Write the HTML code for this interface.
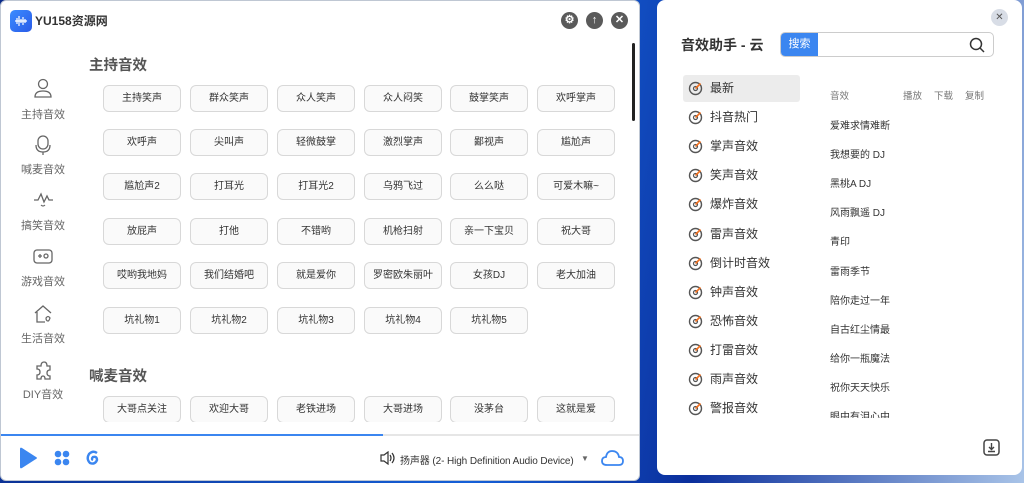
<!DOCTYPE html>
<html><head><meta charset="utf-8"><style>
*{margin:0;padding:0;box-sizing:border-box}
body{width:1024px;height:483px;overflow:hidden;position:relative;font-family:"Liberation Sans","Noto Sans CJK SC",sans-serif;background:linear-gradient(100deg,#0a2a8a 0%,#1560d8 50%,#0b2f9c 70%,#a9c4e8 100%)}
.win{position:absolute;background:#fff;border-radius:6px;overflow:hidden}
#L{left:0;top:0;width:640px;height:481px;border:1px solid #bfc7d3}
#R{left:657px;top:0;width:365px;height:475px;border-radius:8px}
.abs{position:absolute;white-space:nowrap}
.btn{position:absolute;width:78px;height:27px;border:1px solid #d8d8d8;border-radius:6px;background:#fafafa;font-size:10px;color:#333;text-align:center;line-height:25px}
.h{position:absolute;left:88px;font-size:14.5px;color:#555;font-weight:bold}
.side{position:absolute;left:0;width:84px;text-align:center;font-size:11px;color:#666}
.circ{position:absolute;width:17px;height:17px;border-radius:50%;background:#5a5a5a;top:11px;color:#fff;font-size:11px;text-align:center;line-height:17px;font-weight:bold}
.li{position:absolute;left:26px;width:117px;height:27px;font-size:12px;color:#333;line-height:27px;padding-left:27px;border-radius:3px}
.li svg{position:absolute;left:5px;top:6px}
.it{position:absolute;left:173px;font-size:10px;color:#333;white-space:nowrap}
</style></head><body>
<div class="win" id="L">
 <div class="abs" style="left:9px;top:9px;width:22px;height:22px;border-radius:5px;background:linear-gradient(135deg,#3a8cff,#2a5be8)"><svg width="22" height="22"><path d="M5 11h12M7 8v6M9 6v10M11 9v4M13 7v8M15 9v4" stroke="#fff" stroke-width="1.2"/></svg></div>
 <div class="abs" style="left:34px;top:12px;font-size:12px;line-height:16px;font-weight:bold;color:#333">YU158资源网</div>
 <div class="circ" style="left:560px">⚙</div><div class="circ" style="left:585px">↑</div><div class="circ" style="left:610px">✕</div>
 <div class="abs" style="left:631px;top:42px;width:3px;height:78px;background:#222;border-radius:2px"></div>
 <div class="h" style="top:53px">主持音效</div>
 <div class="h" style="top:364px">喊麦音效</div>
 <div id="grid"></div>
 <div class="side" style="top:77px"><svg width="20" height="22" viewBox="0 0 20 22"><circle cx="10" cy="6" r="4.5" fill="none" stroke="#666" stroke-width="1.3"/><path d="M2 19q0-6 8-6t8 6z" fill="none" stroke="#666" stroke-width="1.3"/></svg><div style="margin-top:3px">主持音效</div></div>
 <div class="side" style="top:133px"><svg width="20" height="22"><rect x="5" y="2" width="10" height="13" rx="5" fill="none" stroke="#666" stroke-width="1.3"/><path d="M3 11q0 7 7 7t7-7M10 18v3" fill="none" stroke="#666" stroke-width="1.3"/></svg><div style="margin-top:2px">喊麦音效</div></div>
 <div class="side" style="top:189px"><svg width="22" height="22"><path d="M2 10h4l3-6 3 8 3-6 2 4h4" fill="none" stroke="#666" stroke-width="1.3"/><path d="M9 15q2 2 4 0" fill="none" stroke="#666" stroke-width="1.2"/></svg><div style="margin-top:2px">搞笑音效</div></div>
 <div class="side" style="top:245px"><svg width="22" height="22"><rect x="2" y="4" width="18" height="13" rx="3" fill="none" stroke="#666" stroke-width="1.3"/><path d="M6 10h4M8 8v4" stroke="#666" stroke-width="1.3"/><circle cx="14" cy="10" r="2" fill="none" stroke="#666" stroke-width="1.3"/></svg><div style="margin-top:2px">游戏音效</div></div>
 <div class="side" style="top:302px"><svg width="22" height="22"><path d="M3 10l8-7 8 7M5 9v10h8" fill="none" stroke="#666" stroke-width="1.3"/><path d="M14 15q2-3 4 0q-1 3-2 3q-2 0-2-3z" fill="none" stroke="#666" stroke-width="1.2"/></svg><div style="margin-top:2px">生活音效</div></div>
 <div class="side" style="top:358px"><svg width="22" height="22"><path d="M5 7h4q0-4 3-4t3 4h3v4q-3 0-3 3t3 3v3h-5q0-3-2-3t-2 3H5v-4q3 0 3-3t-3-3z" fill="none" stroke="#666" stroke-width="1.3"/></svg><div style="margin-top:2px">DIY音效</div></div>
 <div class="abs" style="left:0;top:433px;width:640px;height:2px;background:#e6e6e6"><div style="width:382px;height:2px;background:#3b86f0"></div></div>
 <svg class="abs" style="left:17px;top:446px" width="20" height="22"><path d="M2 2q0-2 2-1l14 9q2 1 0 2L4 21q-2 1-2-1z" fill="#3b86f0"/></svg>
 <svg class="abs" style="left:53px;top:449px" width="16" height="16"><circle cx="4" cy="4" r="3.3" fill="#3b86f0"/><circle cx="12" cy="4" r="3.3" fill="#3b86f0"/><circle cx="4" cy="12" r="3.3" fill="#3b86f0"/><circle cx="12" cy="12" r="3.3" fill="#3b86f0"/></svg>
 <svg class="abs" style="left:84px;top:448px" width="16" height="17"><path d="M12 4Q8 1 4 5Q1 10 5 14Q10 16 12 11Q12 7 8 8Q6 10 8 11" fill="none" stroke="#3b86f0" stroke-width="2.4"/></svg>
 <svg class="abs" style="left:379px;top:450px" width="16" height="14"><path d="M1 4h3l4-3v12l-4-3H1z" fill="none" stroke="#333" stroke-width="1.2"/><path d="M10 4q2 3 0 6M12 2q4 5 0 10" fill="none" stroke="#333" stroke-width="1.2"/></svg>
 <div class="abs" style="left:399px;top:451px;font-size:10px;color:#333;letter-spacing:-0.1px">扬声器 (2- High Definition Audio Device)</div>
 <div class="abs" style="left:580px;top:453px;font-size:8px;color:#666">▼</div>
 <svg class="abs" style="left:600px;top:448px" width="24" height="18"><path d="M6 16h12q4 0 4-4t-4-4q-1-6-7-6q-5 0-6 6q-4 0-4 4t5 4z" fill="none" stroke="#3b86f0" stroke-width="1.8"/></svg>
</div>
<div class="win" id="R">
 <div class="abs" style="left:334px;top:9px;width:17px;height:17px;border-radius:50%;background:#d8dde6;color:#555;font-size:10px;text-align:center;line-height:17px">✕</div>
 <div class="abs" style="left:24px;top:35px;font-size:14px;color:#333;font-weight:bold">音效助手 - 云</div>
 <div class="abs" style="left:123px;top:32px;width:214px;height:25px;border:1px solid #ccc;border-radius:5px;overflow:hidden"><div style="width:37px;height:25px;background:#3b86f0;color:#fff;font-size:11px;line-height:23px;text-align:center">搜索</div></div>
 <svg class="abs" style="left:312px;top:37px" width="16" height="16"><circle cx="7" cy="7" r="5.5" fill="none" stroke="#333" stroke-width="1.5"/><path d="M11 11l4 4" stroke="#333" stroke-width="1.5"/></svg>
 <div id="list"></div>
 <div class="abs" style="left:173px;top:88px;font-size:9.5px;color:#777">音效</div>
 <div class="abs" style="left:246px;top:88px;font-size:9.5px;color:#777">播放</div>
 <div class="abs" style="left:277px;top:88px;font-size:9.5px;color:#777">下载</div>
 <div class="abs" style="left:308px;top:88px;font-size:9.5px;color:#777">复制</div>
 <div id="items" class="abs" style="left:0;top:0;width:365px;height:420px;overflow:hidden"></div>
 <svg class="abs" style="left:326px;top:439px" width="17" height="17"><rect x="1" y="1" width="15" height="15" rx="3" fill="none" stroke="#444" stroke-width="1.5"/><path d="M8.5 4v6M6 8l2.5 2.5L11 8M5 12.5h7" fill="none" stroke="#444" stroke-width="1.4"/></svg>
</div>
<script>
var rows=[["主持笑声","群众笑声","众人笑声","众人闷笑","鼓掌笑声","欢呼掌声"],["欢呼声","尖叫声","轻微鼓掌","激烈掌声","鄙视声","尴尬声"],["尴尬声2","打耳光","打耳光2","乌鸦飞过","么么哒","可爱木嘛~"],["放屁声","打他","不错哟","机枪扫射","亲一下宝贝","祝大哥"],["哎哟我地妈","我们结婚吧","就是爱你","罗密欧朱丽叶","女孩DJ","老大加油"],["坑礼物1","坑礼物2","坑礼物3","坑礼物4","坑礼物5"]];
var xs=[102,189,276,363,449,536],ys=[84,128,172,217,261,306],h="";
rows.forEach(function(r,i){r.forEach(function(t,j){h+='<div class="btn" style="left:'+xs[j]+'px;top:'+ys[i]+'px">'+t+'</div>'})});
h+='<div class="abs" style="left:90px;top:395px;width:540px;height:26px;overflow:hidden">';
["大哥点关注","欢迎大哥","老铁进场","大哥进场","没茅台","这就是爱"].forEach(function(t,j){h+='<div class="btn" style="left:'+(xs[j]-90)+'px;top:0">'+t+'</div>'});
h+='</div>';
document.getElementById('grid').outerHTML=h;
var L=["最新","抖音热门","掌声音效","笑声音效","爆炸音效","雷声音效","倒计时音效","钟声音效","恐怖音效","打雷音效","雨声音效","警报音效"],s="";
var ic='<svg width="15" height="15"><circle cx="7.5" cy="7.5" r="6" fill="none" stroke="#555" stroke-width="1.4"/><circle cx="7.5" cy="7.5" r="2" fill="none" stroke="#555" stroke-width="1.2"/><path d="M7.5 7.5l5-5" stroke="#f07020" stroke-width="1.6"/></svg>';
L.forEach(function(t,i){s+='<div class="li" style="top:'+(75+i*29.1)+'px;'+(i==0?'background:#ececec':'')+'">'+ic+t+'</div>'});
document.getElementById('list').outerHTML=s;
var I=["爱难求情难断","我想要的 DJ","黑桃A DJ","风雨飘遥 DJ","青印","雷雨季节","陪你走过一年","自古红尘情最","给你一瓶魔法","祝你天天快乐","眼中有泪心中"],q="";
I.forEach(function(t,i){q+='<div class="it" style="top:'+(117+i*29.1)+'px">'+t+'</div>'});
var el=document.getElementById('items');el.style.height='418px';el.innerHTML=q;
</script>
</body></html>
